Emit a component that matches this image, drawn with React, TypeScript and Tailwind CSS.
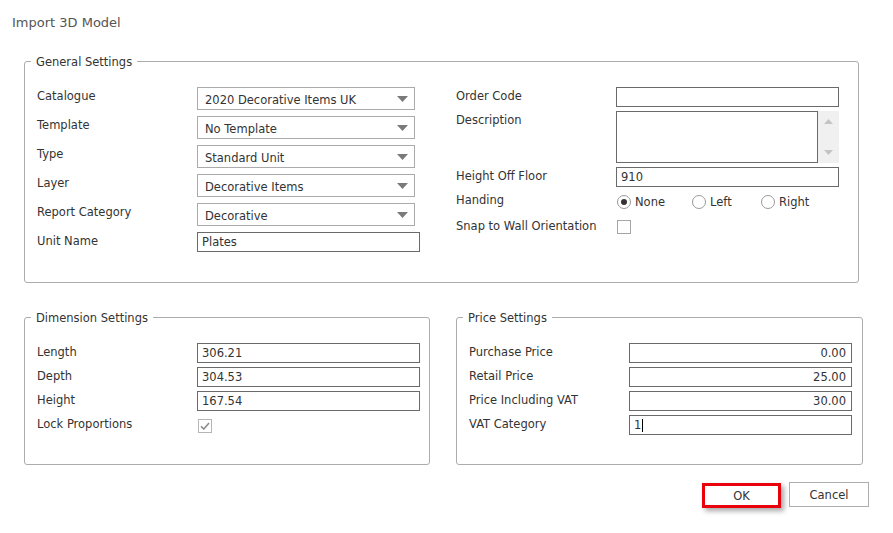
import React from "react";

// ── small form pieces ──────────────────────────────────────────────────────
function Label({ children }: { children: React.ReactNode }) {
  return <div className="w-[160px] shrink-0 leading-[14px] pt-[2px]">{children}</div>;
}

function Select({ value }: { value: string }) {
  return (
    <div className="w-[218px] h-[23px] border border-[#ababab] bg-white flex items-center justify-between pl-[7px] pr-[6px] pt-[2px]">
      <span className="leading-[14px]">{value}</span>
      <svg width="11" height="6" viewBox="0 0 11 6" className="-mt-[1px]">
        <path d="M0 0H11L5.5 6Z" fill="#7a7a7a" />
      </svg>
    </div>
  );
}

function TextBox({ value = "", right = false, cursor = false }: { value?: string; right?: boolean; cursor?: boolean }) {
  return (
    <div
      className={
        "w-[223px] h-[20px] border border-[#6a6a6a] bg-white flex items-center leading-[14px] " +
        (right ? "justify-end pr-[5px]" : "pl-[4px]")
      }
    >
      <span>{value}</span>
      {cursor && <span className="ml-[1px] w-[1px] h-[13px] bg-black" />}
    </div>
  );
}

function Radio({ label, checked = false, w }: { label: string; checked?: boolean; w: string }) {
  return (
    <div className={"flex items-center gap-[4px] " + w}>
      <span className="w-[14px] h-[14px] rounded-full border border-[#9a9a9a] bg-white flex items-center justify-center">
        {checked && <span className="w-[6px] h-[6px] rounded-full bg-[#333]" />}
      </span>
      <span className="leading-[14px]">{label}</span>
    </div>
  );
}

function Legend({ children }: { children: React.ReactNode }) {
  return <legend className="ml-[-6px] px-[5px] leading-[14px] pt-[1px]">{children}</legend>;
}

// ── App ───────────────────────────────────────────────────────────────────
export default function App() {
  return (
    <div
      className="w-[893px] h-[533px] bg-white text-[11.5px] text-[#333] overflow-hidden"
      style={{ fontFamily: "'DejaVu Sans', Tahoma, sans-serif" }}
    >
      {/* Title */}
      <div className="pl-[12px] pt-[15px] text-[13px] leading-[16px] text-[#555]">Import 3D Model</div>

      {/* ── General Settings ── */}
      <fieldset className="ml-[24px] mt-[23px] w-[835px] h-[229px] border border-[#acacac] rounded-[3px] px-[12px] pt-[18px]">
        <Legend>General Settings</Legend>
        <div className="flex">
          {/* Left column */}
          <div className="w-[383px] flex flex-col gap-[6px]">
            <div className="flex"><Label>Catalogue</Label><Select value="2020 Decorative Items UK" /></div>
            <div className="flex"><Label>Template</Label><Select value="No Template" /></div>
            <div className="flex"><Label>Type</Label><Select value="Standard Unit" /></div>
            <div className="flex"><Label>Layer</Label><Select value="Decorative Items" /></div>
            <div className="flex"><Label>Report Category</Label><Select value="Decorative" /></div>
            <div className="flex"><Label>Unit Name</Label><TextBox value="Plates" /></div>
          </div>

          {/* Right column */}
          <div className="ml-[36px] w-[383px] flex flex-col gap-[4px]">
            <div className="flex"><Label>Order Code</Label><TextBox /></div>
            <div className="flex">
              <Label>Description</Label>
              <div className="flex h-[52px]">
                <div className="w-[202px] h-full border border-[#6a6a6a] bg-white" />
                <div className="w-[21px] h-full bg-[#f0f0f0] flex flex-col items-center justify-between py-[8px]">
                  <svg width="9" height="5" viewBox="0 0 9 5"><path d="M0 5H9L4.5 0Z" fill="#c4c4c4" /></svg>
                  <svg width="9" height="5" viewBox="0 0 9 5"><path d="M0 0H9L4.5 5Z" fill="#c4c4c4" /></svg>
                </div>
              </div>
            </div>
            <div className="flex"><Label>Height Off Floor</Label><TextBox value="910" /></div>
            <div className="flex h-[22px]">
              <Label>Handing</Label>
              <div className="flex items-center pl-[1px]">
                <Radio label="None" checked w="w-[75px]" />
                <Radio label="Left" w="w-[69px]" />
                <Radio label="Right" w="w-[60px]" />
              </div>
            </div>
            <div className="flex h-[20px]">
              <Label>Snap to Wall Orientation</Label>
              <span className="ml-[1px] mt-[3px] w-[14px] h-[14px] border border-[#a5a5a5] bg-white" />
            </div>
          </div>
        </div>
      </fieldset>

      {/* ── Dimension + Price ── */}
      <div className="flex ml-[24px] mt-[27px]">
        <fieldset className="w-[406px] h-[155px] border border-[#acacac] rounded-[3px] pl-[12px] pr-[8px] pt-[18px]">
          <Legend>Dimension Settings</Legend>
          <div className="flex flex-col gap-[4px]">
            <div className="flex"><Label>Length</Label><TextBox value="306.21" /></div>
            <div className="flex"><Label>Depth</Label><TextBox value="304.53" /></div>
            <div className="flex"><Label>Height</Label><TextBox value="167.54" /></div>
            <div className="flex h-[20px]">
              <Label>Lock Proportions</Label>
              <span className="ml-[1px] mt-[4px] w-[14px] h-[14px] border border-[#b5b5b5] bg-white flex items-center justify-center">
                <svg width="10" height="8" viewBox="0 0 10 8">
                  <path d="M1 4.2L3.8 7L9 1" stroke="#8a8a8a" strokeWidth="1.6" fill="none" />
                </svg>
              </span>
            </div>
          </div>
        </fieldset>

        <fieldset className="ml-[26px] w-[407px] h-[155px] border border-[#acacac] rounded-[3px] pl-[12px] pr-[8px] pt-[18px]">
          <Legend>Price Settings</Legend>
          <div className="flex flex-col gap-[4px]">
            <div className="flex"><Label>Purchase Price</Label><TextBox value="0.00" right /></div>
            <div className="flex"><Label>Retail Price</Label><TextBox value="25.00" right /></div>
            <div className="flex"><Label>Price Including VAT</Label><TextBox value="30.00" right /></div>
            <div className="flex"><Label>VAT Category</Label><TextBox value="1" cursor /></div>
          </div>
        </fieldset>
      </div>

      {/* ── Buttons ── */}
      <div className="flex justify-end items-start gap-[8px] pr-[24px] mt-[17px]">
        <button className="mt-[1px] w-[79px] h-[25px] border-[3px] border-[#e8000b] bg-white shadow-[3px_3px_5px_rgba(0,0,0,0.35)] leading-[14px] text-[#333] pt-[1px]">
          OK
        </button>
        <button className="w-[80px] h-[25px] border border-[#adadad] bg-white leading-[14px] text-[#333] pt-[1px]">
          Cancel
        </button>
      </div>
    </div>
  );
}
